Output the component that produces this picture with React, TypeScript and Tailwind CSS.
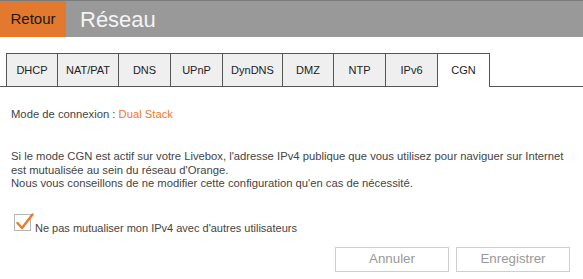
import React from "react";

const tabs = ["DHCP", "NAT/PAT", "DNS", "UPnP", "DynDNS", "DMZ", "NTP", "IPv6", "CGN"];
const widths = [52, 61, 52, 52, 60, 51, 52, 52, 52];

export default function App() {
  return (
    <div className="w-[583px] h-[279px] bg-white overflow-hidden font-['Liberation_Sans',Arial,sans-serif]">
      <div className="flex h-[37px] bg-[#999999] border-t border-[#7a7a7a]">
        <div className="w-[66px] bg-[#e3782f] flex items-center justify-center text-[15px] text-[#1a1a1a]">Retour</div>
        <div className="pl-[14px] flex items-center text-[22px] text-[#f4f4f4]">Réseau</div>
      </div>
      <div className="mt-[16px] flex h-[34px] items-stretch">
        <div className="w-[6px] border-b border-[#555]" />
        {tabs.map((t, i) => {
          const active = t === "CGN";
          return (
            <div
              key={t}
              style={{ width: widths[i] }}
              className={
                "flex items-center justify-center text-[11px] text-[#222] border-t border-r border-[#555] " +
                (i === 0 ? "border-l " : "") +
                (active ? "bg-white" : "bg-[#efefef] border-b")
              }
            >
              {t}
            </div>
          );
        })}
        <div className="flex-1 border-b border-[#555]" />
      </div>
      <div className="pl-[11px] pt-[20px] text-[11.25px] text-[#444] leading-[14px]">
        Mode de connexion : <span className="text-[#f0782a]">Dual Stack</span>
      </div>
      <div className="pl-[11px] pt-[29px] pr-[8px] text-[11.25px] text-[#444] leading-[13.5px]">
        <p>Si le mode CGN est actif sur votre Livebox, l'adresse IPv4 publique que vous utilisez pour naviguer sur Internet est mutualisée au sein du réseau d'Orange.</p>
        <p>Nous vous conseillons de ne modifier cette configuration qu'en cas de nécessité.</p>
      </div>
      <div className="pl-[14px] pt-[23px] flex items-start gap-[4px] text-[11px] text-[#444]">
        <div className="relative w-[17px] h-[17px] border border-[#b5b5b5] bg-white shrink-0">
          <svg className="absolute left-[0px] -top-[3px]" width="19" height="19" viewBox="0 0 19 19">
            <path d="M2.5 11 L7 16 L17.5 2.5" fill="none" stroke="#f0782a" strokeWidth="2.4" strokeLinecap="round" strokeLinejoin="round" />
          </svg>
        </div>
        <span className="pt-[7px] leading-[14px]">Ne pas mutualiser mon IPv4 avec d'autres utilisateurs</span>
      </div>
      <div className="flex justify-end gap-[7px] pr-[13px] pt-[12px]">
        <button className="w-[114px] h-[25px] border border-[#cfcfcf] text-[13.3px] text-[#999] bg-white">Annuler</button>
        <button className="w-[114px] h-[25px] border border-[#cfcfcf] text-[13.3px] text-[#999] bg-white">Enregistrer</button>
      </div>
    </div>
  );
}
